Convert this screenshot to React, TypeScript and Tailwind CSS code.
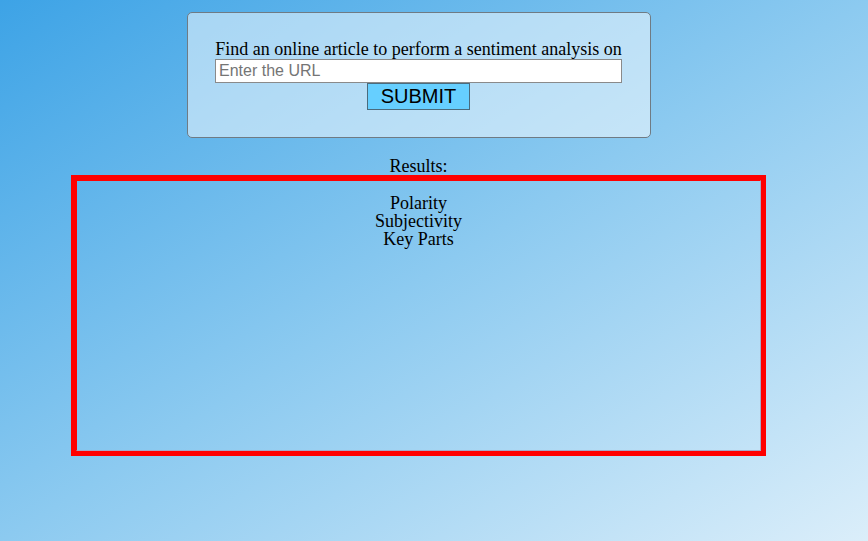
import { useState } from "react";

export default function App() {
  const [url, setUrl] = useState("");

  return (
    <div className="min-h-screen w-full bg-[linear-gradient(to_bottom_right,#3da3e6,#8ccaf0_50%,#dbeefa)] font-['Liberation_Serif',serif] text-black">
      <div className="flex w-[837px] flex-col items-center pt-[12px]">
        <form
          onSubmit={(e) => e.preventDefault()}
          className="flex h-[126px] w-[464px] flex-col items-center rounded-[5px] border border-[#6f7b84] bg-white/50 pt-[27px]"
        >
          <label htmlFor="url" className="text-[18px] leading-[19px]">
            Find an online article to perform a sentiment analysis on
          </label>
          <input
            id="url"
            type="text"
            value={url}
            onChange={(e) => setUrl(e.target.value)}
            placeholder="Enter the URL"
            className="h-[24px] w-[407px] border border-[#8a8a8a] bg-white px-[3px] font-['Liberation_Sans',sans-serif] text-[16px] text-black placeholder:text-[#757575] focus:outline-none"
          />
          <button
            type="submit"
            className="h-[27px] w-[103px] border border-[#4a6b7d] bg-[#66cfff] font-['Liberation_Sans',sans-serif] text-[20px] leading-[25px]"
          >
            SUBMIT
          </button>
        </form>

        <div className="mt-[19px] text-[18px] leading-[18px]">Results:</div>

        <div className="h-[281px] w-[695px] border-[5px] border-[#ff0000]">
          <div className="flex h-full w-full flex-col items-center border-t border-l border-t-[#ff0000] border-l-[#ff0000] border-r border-b border-r-[#a6a8c8] border-b-[#a6a8c8] pt-[13px] text-[18px] leading-[18px]">
            <div>Polarity</div>
            <div>Subjectivity</div>
            <div>Key Parts</div>
          </div>
        </div>
      </div>
    </div>
  );
}
